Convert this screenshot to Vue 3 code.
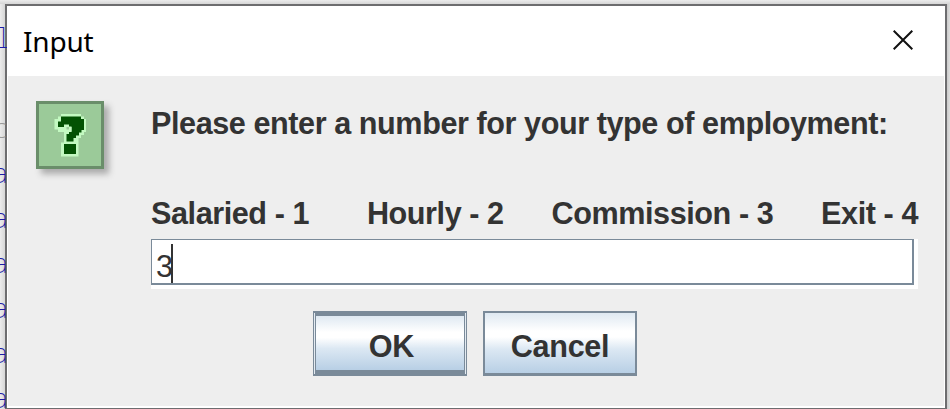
<script setup>
import { ref } from 'vue'
const value = ref('3')
const options = ['Salaried - 1', 'Hourly - 2', 'Commission - 3', 'Exit - 4']
const codeLines = ['l', '', 'c', 'a', 'a', 'a', 'a', 'a', 'a']
</script>

<template>
  <main class="desktop">
    <div class="code">
      <span v-for="(c, i) in codeLines" :key="i" :class="{ gray: i === 2, ell: i === 0 }">{{ c }}</span>
    </div>
    <section class="dialog">
      <header class="titlebar">
        <h1>Input</h1>
        <svg class="close" width="20" height="20" viewBox="0 0 20 20"><path d="M.7.7 19.3 19.3M19.3.7.7 19.3" /></svg>
      </header>
      <div class="body">
        <svg class="icon" width="68" height="68" viewBox="0 0 68 68">
          <rect x="1.5" y="1.5" width="65" height="65" fill="#9bca99" stroke="#6a8e6a" stroke-width="3" />
          <path fill="#c3f9c1" d="M25 13H45V15.5H48V18H50V31H48V34H45V37H42.5V55.5H25V41.5H28V31H22V28.5H18.5V18H22V15.5H25Z" />
          <path fill="#035203" d="M25 15.5H45V18H48V29H45.5V31.5H43V34.5H40V37H37.5V40.5H30.5V33H33V30.5H35.5V25.5H30V26H22V20.5H25ZM28 43H40V53H28Z" />
          <path fill="#9bca99" d="M30.5 26H33V28.5H30.5Z" />
          <path fill="#c3f9c1" d="M28 23.5H33V26H28ZM33 26H35.5V31H33Z" />
        </svg>
        <div class="content">
          <p class="message">Please enter a number for your type of employment:</p>
          <div class="options"><span v-for="o in options" :key="o">{{ o }}</span></div>
          <div class="field"><div class="inner"><span>{{ value }}</span><i class="caret"></i></div></div>
        </div>
        <div class="buttons">
          <button class="ok">OK</button>
          <button class="cancel">Cancel</button>
        </div>
      </div>
    </section>
  </main>
</template>

<style>
body { margin: 0; overflow: hidden; }
</style>
<style scoped>
* { box-sizing: border-box; }
.desktop { position: relative; width: 950px; height: 409px; padding: 4px 3px 0 5px; overflow: hidden; background: linear-gradient(90deg, #ececec, #d2d2d2 6px, #d2d2d2 943px, #c5c5c5 946px, #dedede); }
.desktop::before { content: ''; position: absolute; left: 0; top: 0; width: 950px; height: 4px; background: linear-gradient(#ececec, #d6d6d6); }
.code { position: absolute; left: -8px; top: 15px; width: 15px; z-index: 2; overflow: hidden; font: 200 27px/45px "Noto Sans Mono", "DejaVu Sans Mono", monospace; color: #1c1ca8; }
.code span { display: block; height: 45px; }
.code .gray { color: #999; }
.code .ell { margin-left: 3px; }
.dialog { position: relative; width: 942px; height: 405px; background: #fff; border: 2px solid #6d6d6f; border-bottom-width: 1px; }
.titlebar { display: flex; justify-content: space-between; align-items: center; height: 70px; padding: 0 32px 0 16px; }
h1 { margin: 0; font: 400 28px/40px "Noto Sans", sans-serif; letter-spacing: -.2px; color: #000; }
.close { stroke: #111; stroke-width: 2; fill: none; margin-bottom: 2px; }
.body { height: 330px; width: 936px; margin-left: 1px; background: #eee; display: grid; grid-template-columns: 115px 767px; grid-template-rows: 235px 65px; padding-left: 28px; }
.icon { margin-top: 25px; filter: drop-shadow(5px 5px 3px #aaa); }
.content { color: #333; font: bold 30.6px/36px "Liberation Sans", Arial, sans-serif; letter-spacing: -.43px; white-space: nowrap; }
.message { margin: 29px 0 54px; }
.options { display: flex; justify-content: space-between; height: 44px; }
.options span:first-child { padding-right: 10px; }
.field { height: 50px; padding: 0 4px 4px 0; background: #fff; font-weight: 400; }
.inner { display: flex; height: 46px; border: 1px solid #7a8a99; border-right-width: 2px; border-bottom-width: 2px; background: #fff; padding: 4px 0 0 4px; }
.inner span { padding-top: 4px; }
.caret { width: 2px; height: 39px; margin-left: -2px; background: #333; }
.buttons { grid-column: 1 / -1; display: flex; gap: 16px; padding-left: 277px; }
button { width: 154px; height: 65px; padding: 6px 0 0; border: 2px solid #7a8a99; background: linear-gradient(#dfe9f2, #fff 30%, #fff 40%, #dce8f3 60%, #b8cfe5); color: #333; font: bold 30.6px/36px "Liberation Sans", Arial, sans-serif; letter-spacing: -.3px; }
.ok { position: relative; border-width: 5px 3px 6px; padding-left: 3px; }
.ok::before, .ok::after { content: ''; position: absolute; top: -3px; bottom: -4px; width: 1px; background: #e4ebf2; }
.ok::before { left: -2px; }
.ok::after { right: -2px; }
.cancel { border-bottom-width: 3px; }
</style>
